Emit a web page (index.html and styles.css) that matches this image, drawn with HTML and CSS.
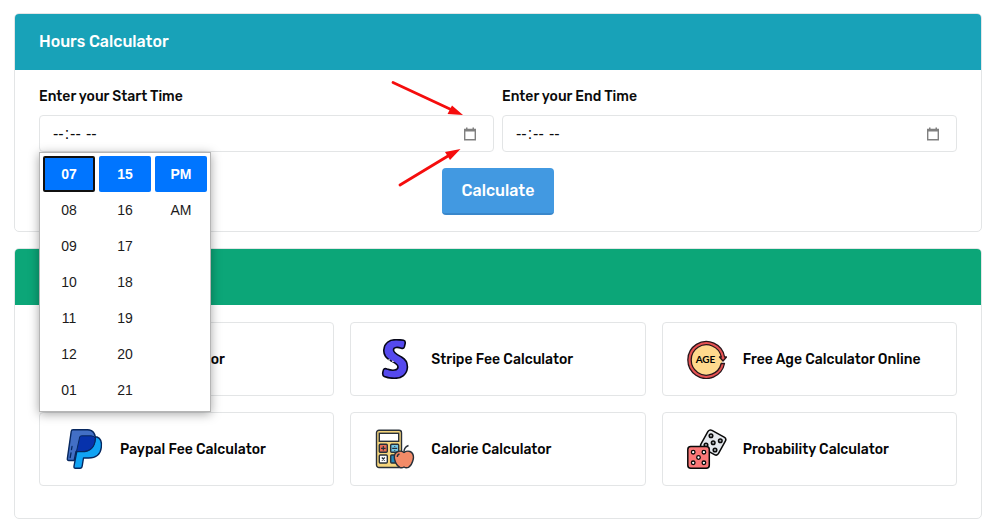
FILE: index.html
```html
<!DOCTYPE html>
<html lang="en">
<head>
<meta charset="utf-8">
<meta name="viewport" content="width=device-width, initial-scale=1">
<title>Hours Calculator</title>
<link rel="stylesheet" href="styles.css">
</head>
<body>
<main class="page">
  <section class="panel">
    <header class="panel-header panel-header-teal"><h1>Hours Calculator</h1></header>
    <form class="hours-form">
      <div class="fields">
        <div class="field">
          <label for="start">Enter your Start Time</label>
          <div class="time-box">
            <input type="time" id="start">
            <svg class="calendar" viewBox="0 0 14 14" aria-hidden="true"><path d="M1.700 2.500h10.600v10.300H1.700z" fill="none" stroke="#808080" stroke-width="1.400"/><path d="M1 2h12v2.500H1zM3 .5h1.500V2H3zM9.500 .5H11V2H9.500z" fill="#808080"/></svg>
            <div class="picker" role="group" aria-label="Start time">
              <div class="picker-column">
                <button type="button" class="selected focused">07</button>
                <button type="button">08</button>
                <button type="button">09</button>
                <button type="button">10</button>
                <button type="button">11</button>
                <button type="button">12</button>
                <button type="button">01</button>
              </div>
              <div class="picker-column">
                <button type="button" class="selected">15</button>
                <button type="button">16</button>
                <button type="button">17</button>
                <button type="button">18</button>
                <button type="button">19</button>
                <button type="button">20</button>
                <button type="button">21</button>
              </div>
              <div class="picker-column">
                <button type="button" class="selected">PM</button>
                <button type="button">AM</button>
              </div>
            </div>
            <svg class="arrows" viewBox="0 0 90 116" aria-hidden="true">
              <path d="M8 6.500 66 33.500M15 109 63 80" stroke="#f50d0d" stroke-width="2.800" stroke-linecap="round"/>
              <path d="M78 39 62.500 38 67 29.500zM75.500 73 65 84 60 76z" fill="#f50d0d"/>
            </svg>
          </div>
        </div>
        <div class="field">
          <label for="end">Enter your End Time</label>
          <div class="time-box">
            <input type="time" id="end">
            <svg class="calendar" viewBox="0 0 14 14" aria-hidden="true"><path d="M1.700 2.500h10.600v10.300H1.700z" fill="none" stroke="#808080" stroke-width="1.400"/><path d="M1 2h12v2.500H1zM3 .5h1.500V2H3zM9.500 .5H11V2H9.500z" fill="#808080"/></svg>
          </div>
        </div>
      </div>
      <button type="submit" class="calculate">Calculate</button>
    </form>
  </section>

  <section class="panel">
    <header class="panel-header panel-header-green"></header>
    <nav class="tools" aria-label="Calculators">
      <a class="tool" href="#love">
        <svg class="tool-icon" viewBox="0 0 40 40" aria-hidden="true"><path d="M20 35C2 22 2 7 12 7q6 0 8 6 2-6 8-6c10 0 10 15-8 28z" fill="#f37b7b" stroke="#111" stroke-width="1.5"/></svg>
        <span>Love Calculator</span>
      </a>
      <a class="tool" href="#stripe">
        <svg class="tool-icon" viewBox="0 0 40 40" aria-hidden="true"><path d="M28.500 1.200C30.500 1.800 30.600 3 30 5.200L29.300 8Q28.600 10 26.300 9.200C22.500 7.800 18.500 8 18.500 11 18.500 14 22 15.500 26.500 18 31 20.500 32.600 24 32.400 28.500 32 35.500 26.500 39.300 19.500 39.300 15.500 39.300 12 38.600 9.300 37.500 7.500 36.700 7.400 35.300 7.900 32.900 8.500 30 9.500 29 12 30 17.500 32 23 31.500 23 28 23 25 19.500 23.800 15.500 21.600 10.500 18.800 8.500 15.500 8.800 11 9.300 3.500 15 .7 21 .7 24 .7 26.500 .7 28.500 1.200z" fill="#5549ee" stroke="#070719" stroke-width="1.600"/><path d="M13.500 20.500l1.500.8M17 22l1.700.7" stroke="#eee" stroke-width="1.200"/></svg>
        <span>Stripe Fee Calculator</span>
      </a>
      <a class="tool" href="#age">
        <svg class="tool-icon" viewBox="0 0 40 40" aria-hidden="true"><circle cx="19.500" cy="20" r="16" fill="#ffd98d"/><path d="M37.500 24.500A18.500 18.500 0 1 1 37.600 18H39.500L36 22 32.500 18H34.300A15.200 15.200 0 1 0 34.200 24.500z" fill="#e85353" stroke="#29151a" stroke-width="1.300" stroke-linejoin="round"/><text class="age-text" x="18.500" y="24" text-anchor="middle">AGE</text></svg>
        <span>Free Age Calculator Online</span>
      </a>
      <a class="tool" href="#paypal">
        <svg class="tool-icon" viewBox="0 0 40 40" aria-hidden="true"><path d="M15.500 8H33Q38.500 10 37.300 18.500C36.500 25.500 32 29 24.500 29H19.500L18.200 37Q17.900 39.300 16 39.300H11.500Q9.700 39.300 10 37.200z" fill="#10a3f4" stroke="#06275f" stroke-width="1.400" stroke-linejoin="round"/><path d="M9 .8H23.500C29.500 .8 32.300 6 31 12 29.600 19.500 25 22.500 18 22.500H12L10.200 31.500H4.800Q3 31.500 3.400 29.300L7.200 2.500Q7.400 .8 9 .8z" fill="#426fc5" stroke="#06275f" stroke-width="1.400" stroke-linejoin="round"/><path d="M15.700 8Q16 6.800 17.500 6.800H27Q31 7 31.200 9.500C31 18.500 25.500 22.500 18 22.500H12.500z" fill="#0732ac" stroke="#06275f"/><path d="M6.200 28.500l.8-4.500M7.500 20.500l.5-3" stroke="#06275f" stroke-width="1.300" stroke-linecap="round"/></svg>
        <span>Paypal Fee Calculator</span>
      </a>
      <a class="tool" href="#calorie">
        <svg class="tool-icon" viewBox="0 0 40 40" aria-hidden="true"><g stroke="#293039" stroke-width="1.400"><rect x="1.500" y="1.200" width="25" height="37.300" rx="2.500" fill="#f5d57c"/><rect x="4.300" y="4.300" width="19.400" height="8" fill="#fff"/><rect x="4.300" y="15.300" width="8" height="8" rx="1" fill="#e86d55"/><rect x="15.700" y="15.300" width="8" height="8" rx="1" fill="#73c7e7"/><rect x="4.300" y="26" width="8" height="8" rx="1" fill="#fff"/><rect x="15.700" y="26" width="8" height="8" rx="1" fill="#2388bd"/><path d="M8.300 17v4.600M6 19.300h4.600M17.200 19.300h5M19.700 16.900v.8M19.700 21v.8M6.800 28.500l3 3M9.800 28.500l-3 3" fill="none" stroke-width="1.200"/><path d="M29 23.500Q26 21.500 23 22.500 18.500 24 19.500 30 21 36.500 25 38.500 27 39.300 29 38 31 39.300 33.500 38.300 37 36 38.300 30 39.200 24.500 35 22.500 32 21.500 29 23.500z" fill="#f38b68"/><path d="M29 24Q28.500 18.500 33.500 16.500M22.300 28Q22.300 25.500 24.500 25" fill="none"/></g></svg>
        <span>Calorie Calculator</span>
      </a>
      <a class="tool" href="#probability">
        <svg class="tool-icon" viewBox="0 0 40 40" aria-hidden="true"><g stroke="#090909" stroke-width="1.500"><rect x="16.200" y="3.500" width="20" height="20" rx="3" transform="rotate(29 26.200 13.500)" fill="#e5e9ee"/><g fill="#aab0b5"><circle cx="24" cy="6.700" r="1.800"/><circle cx="33.300" cy="11.800" r="1.800"/><circle cx="26.200" cy="13.800" r="1.800"/><circle cx="19" cy="16" r="1.800"/><circle cx="28" cy="21" r="1.800"/></g><rect x=".8" y="17.500" width="21.500" height="21.700" rx="3" fill="#fb7777"/><g fill="#fff" stroke-width="1.300"><circle cx="6.200" cy="23.200" r="1.800"/><circle cx="16.900" cy="23.200" r="1.800"/><circle cx="11.500" cy="28.500" r="1.800"/><circle cx="6.200" cy="33.800" r="1.800"/><circle cx="16.900" cy="33.800" r="1.800"/></g></g></svg>
        <span>Probability Calculator</span>
      </a>
    </nav>
  </section>
</main>
</body>
</html>
```
FILE: styles.css
```css
* { box-sizing: border-box; }
body {
  margin: 0;
  background: #fff;
  color: #0b0b0b;
  font-family: Rubik, Roboto, sans-serif;
}
button, input { font: inherit; color: inherit; }
.page {
  display: flex;
  flex-direction: column;
  gap: 16px;
  padding: 13px 14px 8px;
}
.panel {
  border: 1px solid #e3e5e6;
  border-radius: 5px;
}
.panel-header {
  display: flex;
  align-items: center;
  height: 56px;
  padding: 0 24px;
  border-radius: 4px 4px 0 0;
  color: #fff;
}
.panel-header-teal { background: #18a2b8; }
.panel-header-green { background: #0ca678; }
.panel-header h1 {
  margin: 0;
  font-size: 16px;
  line-height: 24px;
  font-weight: 500;
}
.hours-form {
  display: flex;
  flex-direction: column;
  align-items: center;
  gap: 16px;
  padding: 16px 24px;
}
.fields {
  display: grid;
  grid-template-columns: 1fr 1fr;
  gap: 8px;
  width: 100%;
}
.field {
  display: flex;
  flex-direction: column;
  gap: 8px;
}
.field label {
  font-size: 14px;
  line-height: 21px;
  font-weight: 500;
}
.time-box {
  position: relative;
  display: flex;
  align-items: center;
  height: 37px;
  padding: 0 16px 0 12px;
  border: 1px solid #e3e5e6;
  border-radius: 4px;
}
.time-box input {
  flex: 1;
  min-width: 0;
  padding: 0;
  border: 0;
  outline: 0;
  background: none;
  font-family: "Liberation Sans", Arial, sans-serif;
  font-size: 16px;
}
.time-box input::-webkit-calendar-picker-indicator { display: none; }
.calendar {
  width: 14px;
  height: 14px;
}
.picker {
  position: absolute;
  z-index: 2;
  top: 36px;
  left: -1px;
  display: flex;
  gap: 4px;
  padding: 3px;
  border: 1px solid #b5b5b5;
  background: #fff;
  box-shadow: 0 2px 10px rgba(0, 0, 0, 0.35);
}
.picker-column {
  display: flex;
  flex-direction: column;
}
.picker button {
  width: 52px;
  height: 36px;
  padding: 0;
  border: 0;
  border-radius: 2px;
  background: none;
  color: #1b1b1b;
  font-family: "Liberation Sans", Arial, sans-serif;
  font-size: 14px;
}
.picker .selected {
  background: #0075ff;
  color: #fff;
  font-weight: 700;
}
.picker .focused { border: 2px solid #101010; }
.arrows {
  position: absolute;
  top: -40px;
  right: 18px;
  width: 90px;
  height: 116px;
  pointer-events: none;
}
.calculate {
  height: 47px;
  padding: 0 20px;
  border: 0;
  border-bottom: 2px solid #3987cb;
  border-radius: 4px;
  background: #4299e1;
  color: #fff;
  font-size: 16px;
  font-weight: 500;
}
.tools {
  display: grid;
  grid-template-columns: repeat(3, 1fr);
  gap: 16px;
  padding: 17px 24px 32px;
}
.tool {
  display: flex;
  align-items: center;
  gap: 16px;
  height: 74px;
  padding: 0 24px;
  border: 1px solid #e3e5e6;
  border-radius: 4px;
  color: #050505;
  font-size: 14px;
  font-weight: 500;
  text-decoration: none;
}
.tool-icon {
  flex: none;
  width: 40px;
  height: 40px;
}
.age-text {
  font-family: Lato, sans-serif;
  font-size: 10px;
  font-weight: 700;
}
```
